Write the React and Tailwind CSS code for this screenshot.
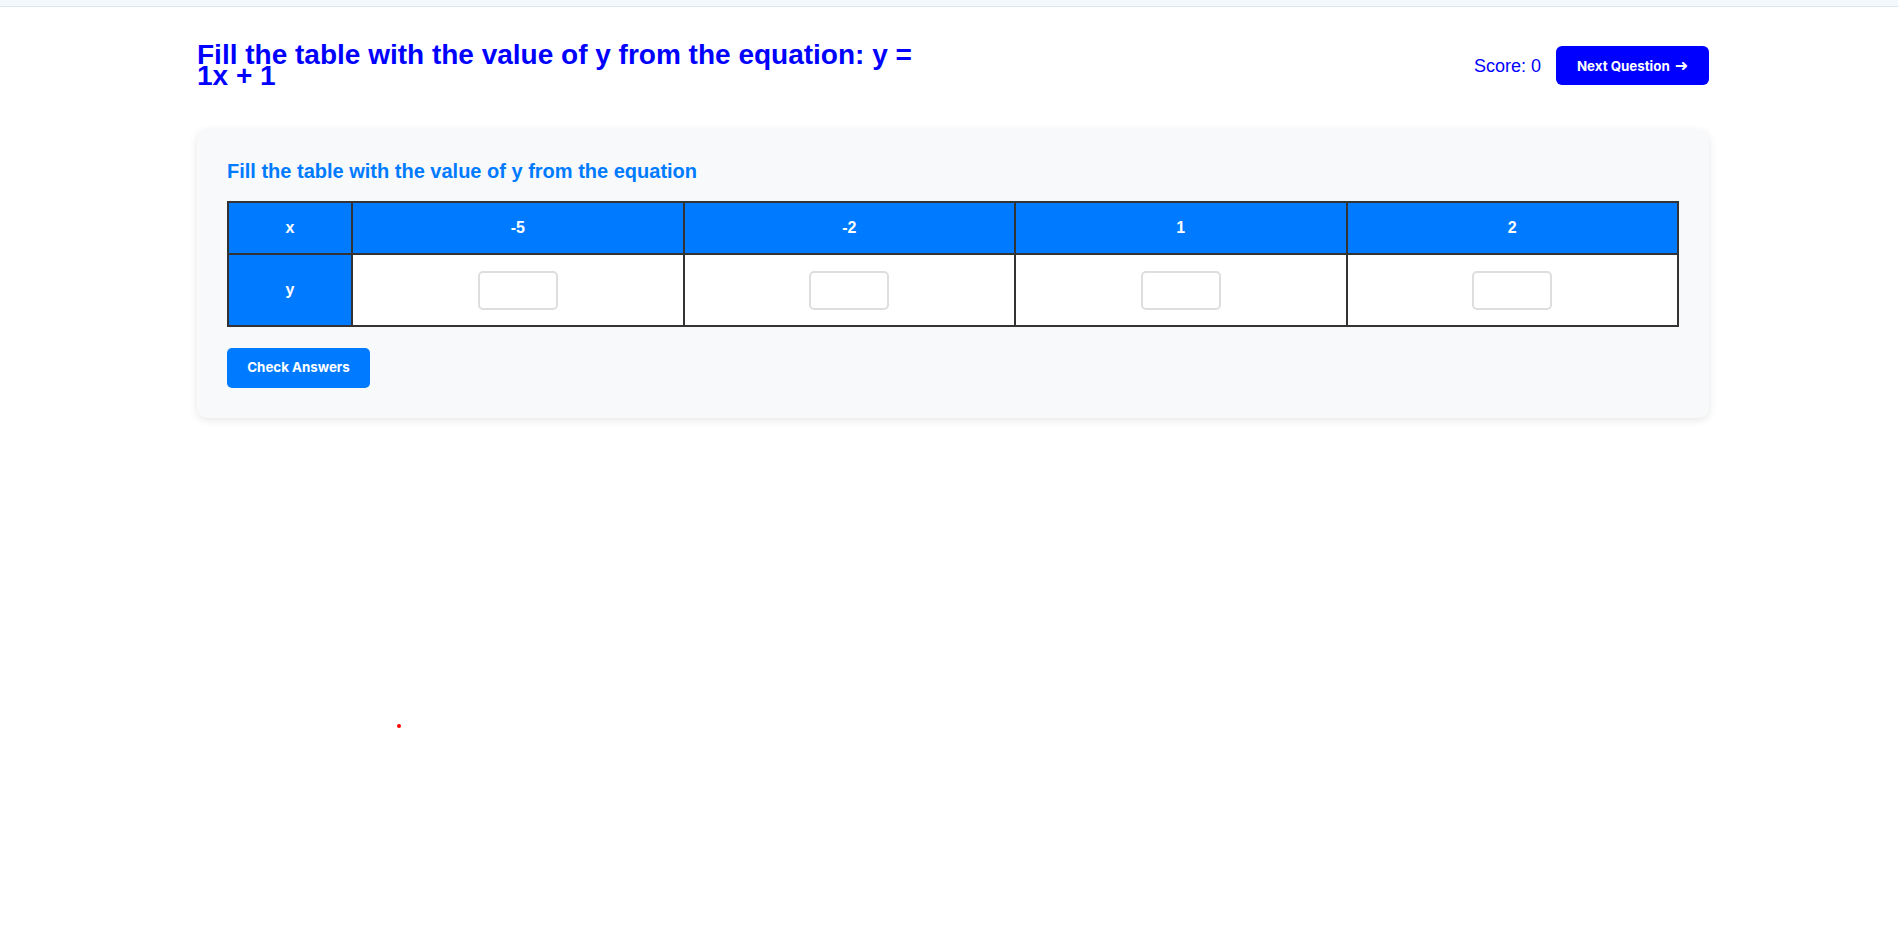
import React, { useState } from 'react';

const xValues = [-5, -2, 1, 2];

export default function App() {
  const [answers, setAnswers] = useState(['', '', '', '']);
  const [score] = useState(0);

  const handleChange = (i, value) => {
    const next = [...answers];
    next[i] = value;
    setAnswers(next);
  };

  return (
    <div className="relative min-h-[943px] bg-white font-['Liberation_Sans',Arial,sans-serif]">
      <div className="h-[7px] bg-[#f2f8fb] border-b border-[#d9e6ec]" />

      <div className="ml-[197px] w-[1512px] pt-[37px]">
        {/* header */}
        <div className="flex items-center justify-between">
          <h1 className="w-[730px] text-[28px] leading-[21px] font-bold text-[#0000ff]">
            Fill the table with the value of y from the equation: y = 1x + 1
          </h1>
          <div className="flex items-center gap-[15px]">
            <span className="text-[18px] leading-[21px] pt-[2px] text-[#0000ff]">Score: {score}</span>
            <button className="w-[153px] h-[39px] pt-[2px] rounded-[6px] bg-[#0000ff] text-white text-[13.333px] leading-[16px] font-bold font-['Inter',sans-serif] flex items-center justify-center gap-[5px]">
              Next Question <span className="font-['DejaVu_Sans',sans-serif] text-[16px] leading-[16px] font-bold">➜</span>
            </button>
          </div>
        </div>

        {/* card */}
        <div className="mt-[44px] bg-[#f8f9fa] rounded-[10px] shadow-[0_2px_8px_rgba(0,0,0,0.1)] p-[30px]">
          <h3 className="text-[20px] leading-[23px] font-bold text-[#007bff] mb-[18px]">
            Fill the table with the value of y from the equation
          </h3>

          <table className="w-full table-fixed border-collapse">
            <thead>
              <tr>
                <th className="w-[124px] border-2 border-[#333] bg-[#007bff] text-white text-[16px] leading-[18px] font-bold py-[16px]">x</th>
                {xValues.map((x) => (
                  <th key={x} className="border-2 border-[#333] bg-[#007bff] text-white text-[16px] leading-[18px] font-bold py-[16px]">
                    {x}
                  </th>
                ))}
              </tr>
            </thead>
            <tbody>
              <tr>
                <td className="border-2 border-[#333] bg-[#007bff] text-white text-[16px] leading-[18px] font-bold text-center py-[15.5px]">y</td>
                {xValues.map((x, i) => (
                  <td key={x} className="border-2 border-[#333] bg-white text-center py-[15.5px] leading-[18px]">
                    <input
                      type="text"
                      value={answers[i]}
                      onChange={(e) => handleChange(i, e.target.value)}
                      className="w-[80px] h-[39px] align-middle bg-white border-2 border-[#dedede] rounded-[5px] text-center text-[16px] outline-none"
                    />
                  </td>
                ))}
              </tr>
            </tbody>
          </table>

          <button className="mt-[21px] w-[143px] h-[40px] rounded-[5px] bg-[#007bff] text-white text-[13.333px] font-bold font-['Inter',sans-serif]">
            Check Answers
          </button>
        </div>
      </div>

      <div className="absolute left-[397px] top-[724px] w-[4px] h-[4px] rounded-full bg-[#ff0000]" />
    </div>
  );
}
